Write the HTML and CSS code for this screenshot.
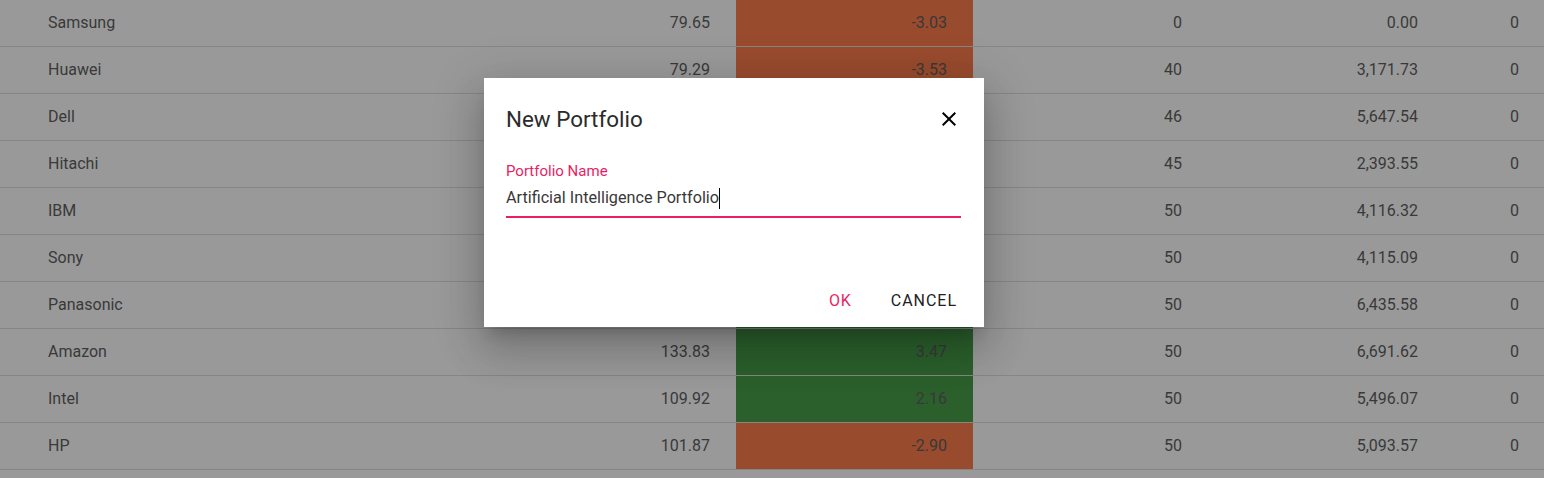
FILE: index.html
```html
<!DOCTYPE html>
<html>
<head>
<meta charset="utf-8">
<link rel="stylesheet" href="styles.css">
</head>
<body>
<div class="table">
  <div class="row"><div class="c name">Samsung</div><div class="c">79.65</div><div class="c neg">-3.03</div><div class="c">0</div><div class="c">0.00</div><div class="c last">0</div></div>
  <div class="row"><div class="c name">Huawei</div><div class="c">79.29</div><div class="c neg">-3.53</div><div class="c">40</div><div class="c">3,171.73</div><div class="c last">0</div></div>
  <div class="row"><div class="c name">Dell</div><div class="c">122.77</div><div class="c neg">-1.84</div><div class="c">46</div><div class="c">5,647.54</div><div class="c last">0</div></div>
  <div class="row"><div class="c name">Hitachi</div><div class="c">53.19</div><div class="c pos">1.12</div><div class="c">45</div><div class="c">2,393.55</div><div class="c last">0</div></div>
  <div class="row"><div class="c name">IBM</div><div class="c">82.33</div><div class="c pos">0.87</div><div class="c">50</div><div class="c">4,116.32</div><div class="c last">0</div></div>
  <div class="row"><div class="c name">Sony</div><div class="c">82.30</div><div class="c neg">-0.45</div><div class="c">50</div><div class="c">4,115.09</div><div class="c last">0</div></div>
  <div class="row"><div class="c name">Panasonic</div><div class="c">128.71</div><div class="c pos">2.05</div><div class="c">50</div><div class="c">6,435.58</div><div class="c last">0</div></div>
  <div class="row"><div class="c name">Amazon</div><div class="c">133.83</div><div class="c pos">3.47</div><div class="c">50</div><div class="c">6,691.62</div><div class="c last">0</div></div>
  <div class="row"><div class="c name">Intel</div><div class="c">109.92</div><div class="c pos">2.16</div><div class="c">50</div><div class="c">5,496.07</div><div class="c last">0</div></div>
  <div class="row"><div class="c name">HP</div><div class="c">101.87</div><div class="c neg">-2.90</div><div class="c">50</div><div class="c">5,093.57</div><div class="c last">0</div></div>
  <div class="row"><div class="c name"></div><div class="c"></div><div class="c"></div><div class="c"></div><div class="c"></div><div class="c last"></div></div>
</div>

<div class="scrim"></div>

<div class="dialog">
  <div class="dialog-head">
    <div class="dialog-title">New Portfolio</div>
    <svg class="close" width="24" height="24" viewBox="0 0 24 24"><path d="M19 6.41 17.59 5 12 10.59 6.41 5 5 6.41 10.59 12 5 17.59 6.41 19 12 13.41 17.59 19 19 17.59 13.41 12z" fill="#000"/></svg>
  </div>
  <div class="field">
    <div class="field-label">Portfolio Name</div>
    <div class="field-input"><span>Artificial Intelligence Portfolio</span><span class="caret"></span></div>
  </div>
  <div class="actions">
    <div class="btn ok">OK</div>
    <div class="btn cancel">CANCEL</div>
  </div>
</div>
</body>
</html>
```
FILE: styles.css
```css
html, body {
  margin: 0;
  padding: 0;
  background: #fff;
  overflow: hidden;
}
body {
  width: 1544px;
  height: 478px;
  font-family: Roboto, "Liberation Sans", sans-serif;
  position: relative;
}
.table {
  display: flex;
  flex-direction: column;
}
.row {
  display: grid;
  grid-template-columns: 500px 236px 237px 235px 236px 100px;
  height: 46px;
  border-bottom: 1px solid #e0e0e0;
}
.c {
  font-size: 16px;
  color: #5f5f5f;
  display: flex;
  align-items: center;
  justify-content: flex-end;
  padding-right: 26px;
  padding-bottom: 2px;
  box-sizing: border-box;
  height: 46px;
}
.c.name {
  justify-content: flex-start;
  padding-left: 48px;
  padding-right: 0;
}
.c.last {
  padding-right: 25px;
}
.c.neg {
  background: #ff7d4c;
}
.c.pos {
  background: #49a04a;
}
.scrim {
  position: absolute;
  inset: 0;
  background: rgba(0, 0, 0, 0.4);
}
.dialog {
  position: absolute;
  left: 484px;
  top: 78px;
  width: 500px;
  height: 249px;
  box-sizing: border-box;
  background: #fff;
  padding: 25px 23px 8px 22px;
  display: flex;
  flex-direction: column;
  box-shadow: 0 11px 15px -7px rgba(0,0,0,.2), 0 24px 38px 3px rgba(0,0,0,.14), 0 9px 46px 8px rgba(0,0,0,.12);
}
.dialog-head {
  display: flex;
  align-items: center;
  justify-content: space-between;
  height: 32px;
}
.dialog-title {
  font-size: 22.4px;
  line-height: 32px;
  color: #2b2b2b;
}
.close {
  display: block;
}
.field {
  margin-top: 26px;
  display: flex;
  flex-direction: column;
}
.field-label {
  font-size: 15px;
  line-height: 20px;
  color: #e91e63;
}
.field-input {
  margin-top: 5px;
  font-size: 16.2px;
  line-height: 24px;
  color: #383838;
  padding-bottom: 6px;
  border-bottom: 2px solid #e91e63;
  display: flex;
  align-items: center;
}
.caret {
  display: inline-block;
  width: 1px;
  height: 21px;
  background: #000;
}
.actions {
  margin-top: auto;
  display: flex;
  justify-content: flex-end;
  gap: 23px;
  margin-right: -4px;
}
.btn {
  height: 36px;
  line-height: 36px;
  padding: 0 8px;
  font-size: 16px;
  letter-spacing: 0.06em;
}
.ok {
  color: #e91e63;
}
.cancel {
  color: #212121;
}
```
